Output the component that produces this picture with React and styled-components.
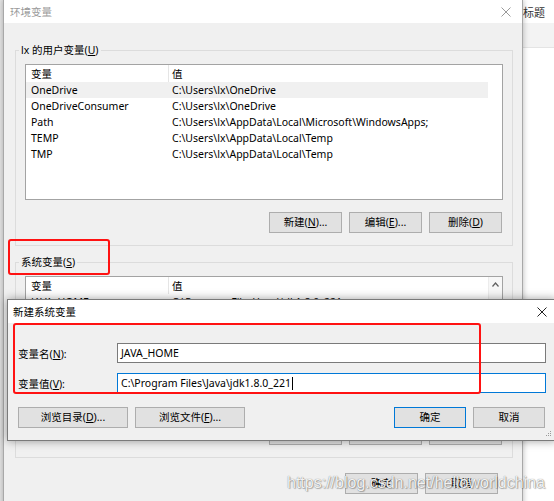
import React from 'react';
import styled, { createGlobalStyle } from 'styled-components';

const Global = createGlobalStyle`
  html, body { margin: 0; padding: 0; background: #fff; }
  body {
    font-family: "Noto Sans", "Noto Sans CJK SC", sans-serif;
    font-size: 10.5px;
    color: #000;
    overflow: hidden;
  }
  * { box-sizing: border-box; }
`;

const Desktop = styled.div`
  position: relative;
  width: 554px;
  height: 501px;
  overflow: hidden;
  background: #fff;
`;

/* app lying behind everything */
const BackApp = styled.div`
  position: absolute;
  inset: 0;
  display: flex;
  flex-direction: column;
  border-left: 3px solid #e6e6e6;
`;
const BackTop = styled.div`
  height: 23px;
  display: flex;
  align-items: center;
  justify-content: flex-end;
  padding-right: 9px;
  font-size: 11px;
  color: #333;
  font-family: "Noto Sans CJK SC", sans-serif;
`;
const BackBand = styled.div`
  height: 25px;
  background: #f3f3f3;
  border-bottom: 1px solid #e4e4e4;
`;

const Window = styled.section`
  position: absolute;
  left: ${(p) => p.$x}px;
  top: ${(p) => p.$y}px;
  width: ${(p) => p.$w}px;
  ${(p) => (p.$minH ? `min-height: ${p.$minH}px;` : '')}
  background: #f0f0f0;
  border: 1px solid ${(p) => (p.$active ? '#7a7a7a' : '#a8a8a8')};
  box-shadow: 0 0 ${(p) => (p.$active ? 9 : 6)}px rgba(0, 0, 0, ${(p) => (p.$active ? 0.38 : 0.28)});
  display: flex;
  flex-direction: column;
`;

const TitleBar = styled.header`
  height: 23px;
  background: #fff;
  display: flex;
  align-items: center;
  justify-content: space-between;
  padding: 0 ${(p) => p.$pr}px 0 ${(p) => p.$pl}px;
  color: ${(p) => (p.$active ? '#000' : '#9a9a9a')};
  font-family: "Noto Sans CJK SC", sans-serif;
  font-size: 10.5px;
`;

const CloseIcon = ({ color }) => (
  <svg width="10" height="10" viewBox="0 0 10 10">
    <path d="M0.5 0.5 L9.5 9.5 M9.5 0.5 L0.5 9.5" stroke={color} strokeWidth="1" fill="none" />
  </svg>
);

const EnvBody = styled.div`
  display: flex;
  flex-direction: column;
  padding: 19px 9px 0 11px;
`;

const GroupBox = styled.fieldset`
  margin: ${(p) => p.$mt || 0}px 0 0 0;
  border: 1px solid #dcdcdc;
  padding: 0 9px 12px 9px;
  min-width: 0;
`;

const Legend = styled.legend`
  padding: 0 2px;
  margin-left: -6px;
  line-height: 16px;
  font-size: 10.5px;
`;

const ListBox = styled.div`
  margin-top: 6px;
  height: 136px;
  border: 1px solid #a3a3a3;
  background: #fff;
  display: flex;
  overflow: hidden;
`;

const ListTable = styled.div`
  width: 462px;
  display: flex;
  flex-direction: column;
`;

const Row = styled.div`
  display: grid;
  grid-template-columns: 142px 320px;
  height: ${(p) => (p.$header ? 17 : 16)}px;
  align-items: center;
  flex: none;
  background: ${(p) => (p.$selected ? '#f0f0f0' : 'transparent')};
  white-space: nowrap;
`;

const NameCell = styled.div`
  padding-left: 5px;
  overflow: hidden;
`;

const ValueCell = styled.div`
  padding-left: ${(p) => (p.$header ? 3 : 4)}px;
  height: 100%;
  display: flex;
  align-items: center;
  border-left: ${(p) => (p.$header ? '1px solid #e5e5e5' : 'none')};
  overflow: hidden;
`;

const ScrollBar = styled.div`
  margin-left: auto;
  width: 15px;
  background: #f7f7f7;
  border-left: 1px solid #ececec;
  display: flex;
  justify-content: center;
  padding-top: 5px;
`;

const ButtonRow = styled.div`
  display: flex;
  justify-content: flex-end;
  gap: ${(p) => p.$gap || 7}px;
  margin-top: ${(p) => p.$mt}px;
  padding-right: ${(p) => p.$pr || 0}px;
`;

const Button = styled.button`
  width: ${(p) => p.$w || 73}px;
  height: 21px;
  flex: none;
  background: #e1e1e1;
  border: 1px solid ${(p) => (p.$default ? '#0078d7' : '#adadad')};
  font-family: "Noto Sans", "Noto Sans CJK SC", sans-serif;
  font-size: 10.5px;
  color: #000;
  padding: 0;
  margin: 0;
  line-height: 19px;
`;

const Spacer = styled.div`
  flex: 1;
`;

const DialogBody = styled.div`
  display: flex;
  flex-direction: column;
  padding: 20px 10px 12px 10px;
  gap: 10px;
`;

const FieldRow = styled.div`
  display: grid;
  grid-template-columns: 99px 1fr;
  align-items: center;
  height: 20px;
`;

const Field = styled.div`
  height: 20px;
  background: #fff;
  border: 1px solid ${(p) => (p.$focused ? '#0078d7' : '#7a7a7a')};
  padding: 0 3px;
  display: flex;
  align-items: center;
  white-space: nowrap;
`;

const Caret = styled.span`
  display: inline-block;
  width: 1px;
  height: 13px;
  background: #000;
  margin-left: 1px;
`;

const DialogButtons = styled.div`
  display: flex;
  gap: 7px;
  margin-top: 4px;
  padding-right: 1px;
`;

const Grip = styled.svg`
  position: absolute;
  right: 4px;
  bottom: 3px;
`;

const Annotation = styled.div`
  position: absolute;
  left: ${(p) => p.$x}px;
  top: ${(p) => p.$y}px;
  width: ${(p) => p.$w}px;
  height: ${(p) => p.$h}px;
  border: 2px solid #ff1212;
  border-radius: 3px;
  pointer-events: none;
`;

const Watermark = styled.div`
  position: absolute;
  left: 287px;
  top: 473px;
  font-family: "Liberation Sans", Arial, sans-serif;
  font-size: 16px;
  line-height: 20px;
  color: rgba(255, 255, 255, 0.92);
  text-shadow: 0 0 1px rgba(0, 0, 0, 0.55), 1px 1px 1px rgba(0, 0, 0, 0.25);
  white-space: nowrap;
`;

const userVars = [
  ['OneDrive', 'C:\\Users\\lx\\OneDrive'],
  ['OneDriveConsumer', 'C:\\Users\\lx\\OneDrive'],
  ['Path', 'C:\\Users\\lx\\AppData\\Local\\Microsoft\\WindowsApps;'],
  ['TEMP', 'C:\\Users\\lx\\AppData\\Local\\Temp'],
  ['TMP', 'C:\\Users\\lx\\AppData\\Local\\Temp'],
];

const sysVars = [
  ['JAVA_HOME', 'C:\\Program Files\\Java\\jdk1.8.0_221'],
  ['ComSpec', 'C:\\WINDOWS\\system32\\cmd.exe'],
  ['DriverData', 'C:\\Windows\\System32\\Drivers\\DriverData'],
  ['NUMBER_OF_PROCESSORS', '4'],
  ['OS', 'Windows_NT'],
  ['Path', 'C:\\WINDOWS\\system32;C:\\WINDOWS;'],
  ['PATHEXT', '.COM;.EXE;.BAT;.CMD;.VBS;.VBE;.JS'],
];

const VarList = ({ rows, selected, scroll }) => (
  <ListBox>
    <ListTable>
      <Row $header>
        <NameCell>变量</NameCell>
        <ValueCell $header>值</ValueCell>
      </Row>
      {rows.map(([n, v], i) => (
        <Row key={n + i} $selected={i === selected}>
          <NameCell>{n}</NameCell>
          <ValueCell>{v}</ValueCell>
        </Row>
      ))}
    </ListTable>
    {scroll && (
      <ScrollBar>
        <svg width="7" height="5" viewBox="0 0 7 5">
          <path d="M0.5 4.5 L3.5 1 L6.5 4.5" stroke="#606060" strokeWidth="1.2" fill="none" />
        </svg>
      </ScrollBar>
    )}
  </ListBox>
);

export default function App() {
  return (
    <Desktop>
      <Global />
      <BackApp>
        <BackTop>标题</BackTop>
        <BackBand />
      </BackApp>

      <Window $x={3} $y={-1} $w={520} $minH={520}>
        <TitleBar $pl={6} $pr={11}>
          <span>环境变量</span>
          <CloseIcon color="#9a9a9a" />
        </TitleBar>
        <EnvBody>
          <GroupBox>
            <Legend>lx 的用户变量(<u>U</u>)</Legend>
            <VarList rows={userVars} selected={0} />
            <ButtonRow $mt={12} $pr={1}>
              <Button>新建(<u>N</u>)...</Button>
              <Button>编辑(<u>E</u>)...</Button>
              <Button>删除(<u>D</u>)</Button>
            </ButtonRow>
          </GroupBox>
          <GroupBox $mt={8}>
            <Legend>系统变量(<u>S</u>)</Legend>
            <VarList rows={sysVars} scroll />
            <ButtonRow $mt={12} $pr={1}>
              <Button>新建(<u>W</u>)...</Button>
              <Button>编辑(<u>I</u>)...</Button>
              <Button>删除(<u>L</u>)</Button>
            </ButtonRow>
          </GroupBox>
          <ButtonRow $mt={15} $pr={15}>
            <Button>确定</Button>
            <Button>取消</Button>
          </ButtonRow>
        </EnvBody>
      </Window>

      <Annotation $x={8} $y={239} $w={102} $h={36} />

      <Window $x={7} $y={299} $w={550} $active>
        <TitleBar $pl={5} $pr={9} $active>
          <span>新建系统变量</span>
          <CloseIcon color="#222" />
        </TitleBar>
        <DialogBody>
          <FieldRow>
            <span>变量名(<u>N</u>):</span>
            <Field>JAVA_HOME</Field>
          </FieldRow>
          <FieldRow>
            <span>变量值(<u>V</u>):</span>
            <Field $focused>
              C:\Program Files\Java\jdk1.8.0_221
              <Caret />
            </Field>
          </FieldRow>
          <DialogButtons>
            <Button $w={110}>浏览目录(<u>D</u>)...</Button>
            <Button $w={110}>浏览文件(<u>F</u>)...</Button>
            <Spacer />
            <Button $w={72} $default>确定</Button>
            <Button $w={72}>取消</Button>
          </DialogButtons>
        </DialogBody>
        <Grip width="6" height="6" viewBox="0 0 6 6">
          <rect x="4" y="0" width="1" height="1" fill="#9a9a9a" />
          <rect x="2" y="2" width="1" height="1" fill="#9a9a9a" />
          <rect x="4" y="2" width="1" height="1" fill="#9a9a9a" />
          <rect x="0" y="4" width="1" height="1" fill="#9a9a9a" />
          <rect x="2" y="4" width="1" height="1" fill="#9a9a9a" />
          <rect x="4" y="4" width="1" height="1" fill="#9a9a9a" />
        </Grip>
      </Window>

      <Annotation $x={13} $y={323} $w={468} $h={71} />

      <Watermark>https://blog.csdn.net/helloworldchina</Watermark>
    </Desktop>
  );
}
